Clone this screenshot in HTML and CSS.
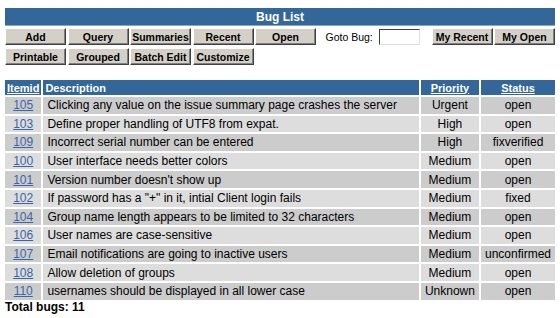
FILE: index.html
```html
<!DOCTYPE html>
<html lang="en">
<head>
  <meta charset="UTF-8">
  <title>Bug List</title>
  <link rel="stylesheet" href="styles.css">
</head>
<body>
  <div class="page">
    <div class="title-bar">Bug List</div>

    <div class="toolbar">
      <button class="tool-button">Add</button>
      <button class="tool-button">Query</button>
      <button class="tool-button">Summaries</button>
      <button class="tool-button">Recent</button>
      <button class="tool-button">Open</button>
      <label class="goto-label">Goto Bug:</label>
      <input class="goto-input" type="text">
      <button class="tool-button my-recent">My Recent</button>
      <button class="tool-button">My Open</button>
    </div>
    <div class="toolbar">
      <button class="tool-button">Printable</button>
      <button class="tool-button">Grouped</button>
      <button class="tool-button">Batch Edit</button>
      <button class="tool-button">Customize</button>
    </div>

    <table class="bug-table">
      <thead>
        <tr>
          <th class="col-id"><a href="#">Itemid</a></th>
          <th class="col-desc">Description</th>
          <th class="col-pri"><a href="#">Priority</a></th>
          <th class="col-status"><a href="#">Status</a></th>
        </tr>
      </thead>
      <tbody>
        <tr class="dark"><td class="col-id"><a href="#">105</a></td><td class="col-desc">Clicking any value on the issue summary page crashes the server</td><td class="col-pri">Urgent</td><td class="col-status">open</td></tr>
        <tr class="light"><td class="col-id"><a href="#">103</a></td><td class="col-desc">Define proper handling of UTF8 from expat.</td><td class="col-pri">High</td><td class="col-status">open</td></tr>
        <tr class="dark"><td class="col-id"><a href="#">109</a></td><td class="col-desc">Incorrect serial number can be entered</td><td class="col-pri">High</td><td class="col-status">fixverified</td></tr>
        <tr class="light"><td class="col-id"><a href="#">100</a></td><td class="col-desc">User interface needs better colors</td><td class="col-pri">Medium</td><td class="col-status">open</td></tr>
        <tr class="dark"><td class="col-id"><a href="#">101</a></td><td class="col-desc">Version number doesn't show up</td><td class="col-pri">Medium</td><td class="col-status">open</td></tr>
        <tr class="light"><td class="col-id"><a href="#">102</a></td><td class="col-desc">If password has a "+" in it, intial Client login fails</td><td class="col-pri">Medium</td><td class="col-status">fixed</td></tr>
        <tr class="dark"><td class="col-id"><a href="#">104</a></td><td class="col-desc">Group name length appears to be limited to 32 characters</td><td class="col-pri">Medium</td><td class="col-status">open</td></tr>
        <tr class="light"><td class="col-id"><a href="#">106</a></td><td class="col-desc">User names are case-sensitive</td><td class="col-pri">Medium</td><td class="col-status">open</td></tr>
        <tr class="dark"><td class="col-id"><a href="#">107</a></td><td class="col-desc">Email notifications are going to inactive users</td><td class="col-pri">Medium</td><td class="col-status">unconfirmed</td></tr>
        <tr class="light"><td class="col-id"><a href="#">108</a></td><td class="col-desc">Allow deletion of groups</td><td class="col-pri">Medium</td><td class="col-status">open</td></tr>
        <tr class="dark"><td class="col-id"><a href="#">110</a></td><td class="col-desc">usernames should be displayed in all lower case</td><td class="col-pri">Unknown</td><td class="col-status">open</td></tr>
      </tbody>
    </table>

    <div class="total">Total bugs: 11</div>
  </div>
</body>
</html>
```

FILE: styles.css
```css
body {
  margin: 0;
  background: #ffffff;
  color: #000000;
  font-family: "Liberation Sans", Arial, sans-serif;
}
.page {
  padding: 8px 5px 0 5px;
}
.title-bar {
  height: 18px;
  line-height: 18px;
  background: #336699;
  border-bottom: 1px solid #8aa6c4;
  box-sizing: border-box;
  color: #ffffff;
  font-weight: bold;
  font-size: 12px;
  text-align: center;
}
.toolbar {
  display: flex;
  align-items: center;
  gap: 1.5px;
  margin-top: 2px;
  height: 17px;
}
.toolbar + .toolbar {
  margin-top: 3px;
}
.tool-button {
  box-sizing: border-box;
  flex: 0 0 61px;
  width: 61px;
  min-width: 0;
  height: 17px;
  padding: 0;
  margin: 0;
  overflow: hidden;
  background: #d4d0c8;
  border: 1px solid;
  border-color: #ffffff #404040 #404040 #ffffff;
  box-shadow: inset -1px -1px 0 #808080;
  font-family: "Liberation Sans", Arial, sans-serif;
  font-weight: bold;
  font-size: 10.5px;
  color: #000000;
  white-space: nowrap;
  cursor: pointer;
}
.goto-label {
  flex: 0 0 52px;
  margin-left: 8px;
  font-size: 10.5px;
  white-space: nowrap;
}
.goto-input {
  box-sizing: border-box;
  flex: 0 0 41px;
  width: 41px;
  height: 16px;
  margin: 0;
  padding: 0;
  border: 1px solid;
  border-color: #404040 #e0e0e0 #e0e0e0 #404040;
  background: #ffffff;
}
.my-recent {
  margin-left: 10px;
}
.bug-table {
  margin: 13px -2px -2px -2px;
  width: calc(100% + 4px);
  border-collapse: separate;
  border-spacing: 2px;
  font-size: 12px;
}
.bug-table th {
  background: #336699;
  color: #ffffff;
  font-size: 11px;
  font-weight: bold;
  height: 15px;
  padding: 0 2px;
}
.bug-table th a {
  color: #ffffff;
}
.bug-table td {
  height: 16.6px;
  padding: 0 4px;
}
.dark td {
  background: #cccccc;
}
.light td {
  background: #dddddd;
}
.col-id {
  width: 28px;
  text-align: center;
}
.bug-table th.col-id {
  text-align: left;
}
.col-id a {
  color: #3a66a8;
}
.col-desc {
  text-align: left;
}
.col-pri {
  width: 50px;
  text-align: center;
}
.col-status {
  width: 65px;
  text-align: center;
}
.total {
  font-size: 12px;
  font-weight: bold;
}
```
